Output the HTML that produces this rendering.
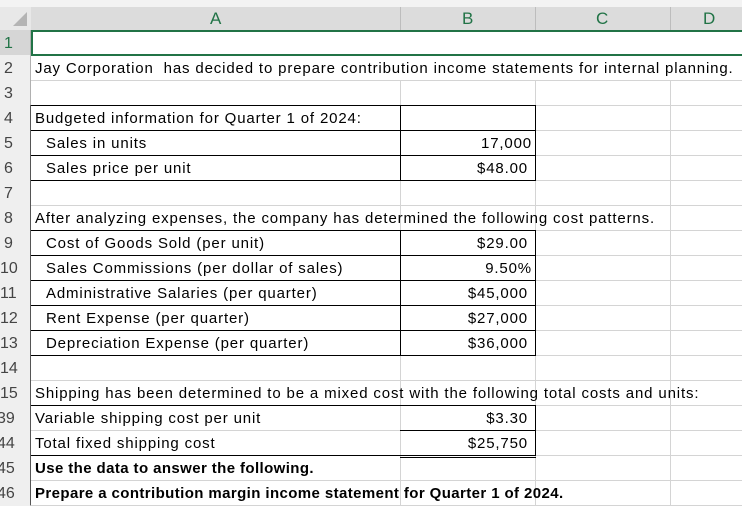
<!DOCTYPE html>
<html><head><style>
*{margin:0;padding:0;box-sizing:border-box}
body{width:742px;height:506px;background:#fff;position:relative;overflow:hidden;font-family:"Liberation Sans",Arial,sans-serif;font-size:15px;letter-spacing:0.85px;color:#000}
.a{position:absolute}
.hl{position:absolute;height:1px;background:#d4d4d4}
.vl{position:absolute;width:1px;background:#d4d4d4}
.bl{position:absolute;height:1px;background:#000}
.bv{position:absolute;width:1px;background:#000}
.rh{position:absolute;left:0;width:30px;height:25px;line-height:27px;font-size:16px;letter-spacing:0;color:#444;background:#efefef;padding-left:4px}
.t{position:absolute;height:25px;line-height:28px;white-space:nowrap}
.r{position:absolute;height:25px;line-height:28px;text-align:right;white-space:nowrap;margin-right:-0.85px}
.b{font-weight:bold;letter-spacing:0.4px}
.hd{position:absolute;top:7px;color:#217346;font-size:17px;letter-spacing:0;line-height:24px}
</style></head><body>
<div class="a" style="left:0;top:0;width:742px;height:7px;background:#f3f3f3"></div>
<div class="a" style="left:0;top:7px;width:742px;height:23px;background:#dcdcdc"></div>
<div class="a" style="left:0;top:7px;width:31px;height:23px;background:#e8e8e8"></div>
<svg class="a" style="left:10px;top:11px" width="18" height="16"><polygon points="17,1 17,15 3,15" fill="#b4b4b4"/></svg>
<div class="vl" style="left:400px;top:7px;height:23px;background:#bdbdbd"></div>
<div class="vl" style="left:535px;top:7px;height:23px;background:#bdbdbd"></div>
<div class="vl" style="left:670px;top:7px;height:23px;background:#bdbdbd"></div>
<div class="hd" style="left:210px">A</div>
<div class="hd" style="left:462px">B</div>
<div class="hd" style="left:596px">C</div>
<div class="hd" style="left:703px">D</div>
<div class="a" style="left:0;top:30px;width:31px;height:476px;background:#efefef"></div>
<div class="vl" style="left:30px;top:30px;height:476px;background:#b0b0b0"></div>
<div class="rh" style="top:30px;background:#d6d6d6;color:#217346">1</div>
<div class="rh" style="top:55px">2</div><div class="rh" style="top:80px">3</div><div class="rh" style="top:105px">4</div>
<div class="rh" style="top:130px">5</div><div class="rh" style="top:155px">6</div><div class="rh" style="top:180px">7</div>
<div class="rh" style="top:205px">8</div><div class="rh" style="top:230px">9</div>
<div class="rh" style="top:255px;padding-left:0">10</div><div class="rh" style="top:280px;padding-left:0">11</div>
<div class="rh" style="top:305px;padding-left:0">12</div><div class="rh" style="top:330px;padding-left:0">13</div>
<div class="rh" style="top:355px;padding-left:0">14</div><div class="rh" style="top:380px;padding-left:0">15</div>
<div class="rh" style="top:405px;left:-3px;padding-left:0">39</div><div class="rh" style="top:430px;left:-3px;padding-left:0">44</div>
<div class="rh" style="top:455px;left:-3px;padding-left:0">45</div><div class="rh" style="top:480px;left:-3px;padding-left:0">46</div>
<div class="hl" style="left:31px;top:80px;width:711px"></div>
<div class="hl" style="left:31px;top:105px;width:711px"></div>
<div class="hl" style="left:536px;top:130px;width:206px"></div>
<div class="hl" style="left:536px;top:155px;width:206px"></div>
<div class="hl" style="left:31px;top:180px;width:711px"></div>
<div class="hl" style="left:31px;top:205px;width:711px"></div>
<div class="hl" style="left:536px;top:230px;width:206px"></div>
<div class="hl" style="left:536px;top:255px;width:206px"></div>
<div class="hl" style="left:536px;top:280px;width:206px"></div>
<div class="hl" style="left:536px;top:305px;width:206px"></div>
<div class="hl" style="left:536px;top:330px;width:206px"></div>
<div class="hl" style="left:31px;top:355px;width:711px"></div>
<div class="hl" style="left:31px;top:380px;width:711px"></div>
<div class="hl" style="left:536px;top:405px;width:206px"></div>
<div class="hl" style="left:31px;top:430px;width:369px"></div>
<div class="hl" style="left:536px;top:430px;width:206px"></div>
<div class="hl" style="left:536px;top:455px;width:206px"></div>
<div class="hl" style="left:31px;top:480px;width:711px"></div>
<div class="hl" style="left:31px;top:505px;width:711px"></div>
<div class="vl" style="left:400px;top:80px;height:426px"></div>
<div class="vl" style="left:535px;top:80px;height:426px"></div>
<div class="vl" style="left:670px;top:80px;height:426px"></div>
<div class="a" style="left:31px;top:30px;width:711px;height:26px;border:2px solid #217346;border-right:none"></div>
<div class="bl" style="left:31px;top:105px;width:505px"></div>
<div class="bl" style="left:31px;top:130px;width:505px"></div>
<div class="bl" style="left:31px;top:155px;width:505px"></div>
<div class="bl" style="left:31px;top:180px;width:505px"></div>
<div class="bv" style="left:400px;top:105px;height:75px"></div>
<div class="bv" style="left:535px;top:105px;height:75px"></div>
<div class="bl" style="left:31px;top:230px;width:505px"></div>
<div class="bl" style="left:31px;top:255px;width:505px"></div>
<div class="bl" style="left:31px;top:280px;width:505px"></div>
<div class="bl" style="left:31px;top:305px;width:505px"></div>
<div class="bl" style="left:31px;top:330px;width:505px"></div>
<div class="bl" style="left:31px;top:355px;width:505px"></div>
<div class="bv" style="left:400px;top:230px;height:125px"></div>
<div class="bv" style="left:535px;top:230px;height:125px"></div>
<div class="bl" style="left:31px;top:405px;width:505px"></div>
<div class="bl" style="left:400px;top:430px;width:136px"></div>
<div class="bl" style="left:31px;top:455px;width:505px"></div>
<div class="bl" style="left:400px;top:457px;width:136px"></div>
<div class="bv" style="left:535px;top:405px;height:50px"></div>
<div class="bv" style="left:30px;top:105px;height:400px;background:#555"></div>
<div class="t" style="left:35px;top:55px">Jay Corporation&nbsp; has decided to prepare contribution income statements for internal planning.</div>
<div class="t" style="left:35px;top:105px">Budgeted information for Quarter 1 of 2024:</div>
<div class="t" style="left:46px;top:130px">Sales in units</div>
<div class="t" style="left:46px;top:155px">Sales price per unit</div>
<div class="r" style="left:400px;width:132px;top:130px">17,000</div>
<div class="r" style="left:400px;width:128px;top:155px">$48.00</div>
<div class="t" style="left:35px;top:205px">After analyzing expenses, the company has determined the following cost patterns.</div>
<div class="t" style="left:46px;top:230px">Cost of Goods Sold (per unit)</div>
<div class="t" style="left:46px;top:255px">Sales Commissions (per dollar of sales)</div>
<div class="t" style="left:46px;top:280px">Administrative Salaries (per quarter)</div>
<div class="t" style="left:46px;top:305px">Rent Expense (per quarter)</div>
<div class="t" style="left:46px;top:330px">Depreciation Expense (per quarter)</div>
<div class="r" style="left:400px;width:128px;top:230px">$29.00</div>
<div class="r" style="left:400px;width:132px;top:255px">9.50%</div>
<div class="r" style="left:400px;width:128px;top:280px">$45,000</div>
<div class="r" style="left:400px;width:128px;top:305px">$27,000</div>
<div class="r" style="left:400px;width:128px;top:330px">$36,000</div>
<div class="t" style="left:35px;top:380px">Shipping has been determined to be a mixed cost with the following total costs and units:</div>
<div class="t" style="left:35px;top:405px">Variable shipping cost per unit</div>
<div class="t" style="left:35px;top:430px">Total fixed shipping cost</div>
<div class="r" style="left:400px;width:128px;top:405px">$3.30</div>
<div class="r" style="left:400px;width:128px;top:430px">$25,750</div>
<div class="t b" style="left:35px;top:455px">Use the data to answer the following.</div>
<div class="t b" style="left:35px;top:480px">Prepare a contribution margin income statement for Quarter 1 of 2024.</div>
</body></html>
